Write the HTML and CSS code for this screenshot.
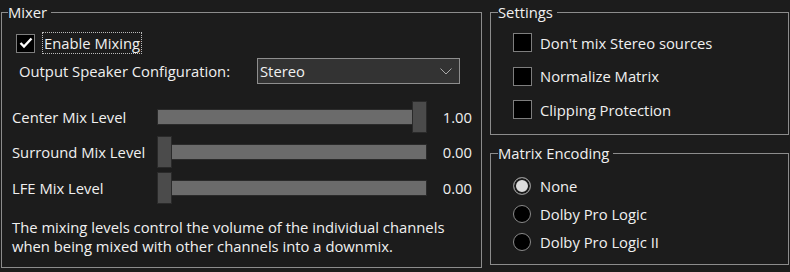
FILE: index.html
```html
<!DOCTYPE html>
<html lang="en">
<head>
  <meta charset="UTF-8">
  <title>Mixer Settings</title>
  <link rel="stylesheet" href="styles.css">
</head>
<body>
  <div class="panel">
    <fieldset class="group mixer">
      <legend>Mixer</legend>
      <div class="check-row enable">
        <span class="box checked">
          <svg width="14" height="12" viewBox="0 0 14 12"><polyline points="1.5,6 5,9.5 12.5,1.5" fill="none" stroke="#fff" stroke-width="2.4"/></svg>
        </span>
        <span class="focus">Enable Mixing</span>
      </div>
      <div class="speaker-row">
        <span class="speaker-label">Output Speaker Configuration:</span>
        <div class="select">
          <span>Stereo</span>
          <svg width="12" height="7" viewBox="0 0 12 7"><polyline points="0.5,0.5 6,6 11.5,0.5" fill="none" stroke="#aaa" stroke-width="1"/></svg>
        </div>
      </div>
      <div class="sliders">
        <span class="s-label">Center Mix Level</span>
        <div class="slider"><div class="track"></div><div class="thumb" style="left: 255px;"></div></div>
        <span class="s-value">1.00</span>

        <span class="s-label">Surround Mix Level</span>
        <div class="slider"><div class="track"></div><div class="thumb" style="left: 0px;"></div></div>
        <span class="s-value">0.00</span>

        <span class="s-label">LFE Mix Level</span>
        <div class="slider"><div class="track"></div><div class="thumb" style="left: 0px;"></div></div>
        <span class="s-value">0.00</span>
      </div>
      <p class="note">The mixing levels control the volume of the individual channels</p>
      <p class="note">when being mixed with other channels into a downmix.</p>
    </fieldset>

    <div class="side">
      <fieldset class="group settings">
        <legend>Settings</legend>
        <div class="check-row"><span class="box"></span><span>Don't mix Stereo sources</span></div>
        <div class="check-row"><span class="box"></span><span>Normalize Matrix</span></div>
        <div class="check-row"><span class="box"></span><span>Clipping Protection</span></div>
      </fieldset>
      <fieldset class="group encoding">
        <legend>Matrix Encoding</legend>
        <div class="radio-row"><span class="radio on"></span><span>None</span></div>
        <div class="radio-row"><span class="radio"></span><span>Dolby Pro Logic</span></div>
        <div class="radio-row"><span class="radio"></span><span>Dolby Pro Logic II</span></div>
      </fieldset>
    </div>
  </div>
</body>
</html>
```
FILE: styles.css
```css
* { margin: 0; padding: 0; box-sizing: border-box; }
body {
  background: #1c1c1c;
  color: #f0f0f0;
  font-family: 'Open Sans', 'Noto Sans', sans-serif;
  font-size: 14.8px;
  width: 790px;
  height: 272px;
  overflow: hidden;
}
.panel {
  display: flex;
  gap: 8px;
  padding: 1px 0 0 1px;
}
.group {
  border: 1px solid #8c8c8c;
  min-width: 0;
  padding: 0;
}
.group legend {
  padding: 0 4px 0 0;
  line-height: 22px;
}
.mixer {
  width: 481px;
  height: 267px;
  padding: 9px 0 0 10px;
}
.mixer legend { margin-left: -4px; }
.side {
  display: flex;
  flex-direction: column;
  gap: 7px;
  width: 299px;
}
.settings { height: 134px; padding: 3px 0 0 22px; }
.encoding { height: 123px; padding: 8px 0 0 22px; }
.settings legend, .encoding legend { margin-left: -15px; }

.check-row {
  display: flex;
  align-items: center;
  gap: 8px;
  height: 33.5px;
}
.box {
  width: 19px;
  height: 19px;
  border: 1px solid #7e7e7e;
  background: #000;
  display: flex;
  align-items: center;
  justify-content: center;
}
.enable { padding-left: 4px; height: 22px; }
.focus {
  outline: 1px dotted #bbb;
  padding: 0 1px;
  line-height: 20px;
}
.speaker-row {
  display: flex;
  align-items: center;
  justify-content: space-between;
  margin: 4px 21px 0 7px;
  height: 26px;
}
.select {
  width: 203px;
  height: 26px;
  background: #333;
  border: 1px solid #8e8e8e;
  display: flex;
  align-items: center;
  justify-content: space-between;
  padding: 0 7px 0 2px;
}
.sliders {
  display: grid;
  grid-template-columns: 145px 270px 45px;
  grid-auto-rows: 35.5px;
  align-items: center;
  margin: 15px 0 0 0;
}
.s-value { text-align: right; }
.slider {
  position: relative;
  height: 32px;
  display: flex;
  align-items: center;
}
.track {
  width: 100%;
  height: 16px;
  background: #6b6b6b;
  border: 1px solid #2a2a2a;
}
.thumb {
  position: absolute;
  top: 0;
  width: 15px;
  height: 32px;
  background: #4b4b4b;
  border: 1px solid #2a2a2a;
}
.note {
  line-height: 19px;
}
.sliders + .note { margin-top: 12px; }
.radio-row {
  display: flex;
  align-items: center;
  gap: 9px;
  height: 28px;
}
.radio {
  width: 18px;
  height: 18px;
  border-radius: 50%;
  border: 1px solid #8a8a8a;
  background: #000;
}
.radio.on {
  background: #dcdcdc;
  box-shadow: inset 0 0 0 2px #1a1a1a;
}
```
